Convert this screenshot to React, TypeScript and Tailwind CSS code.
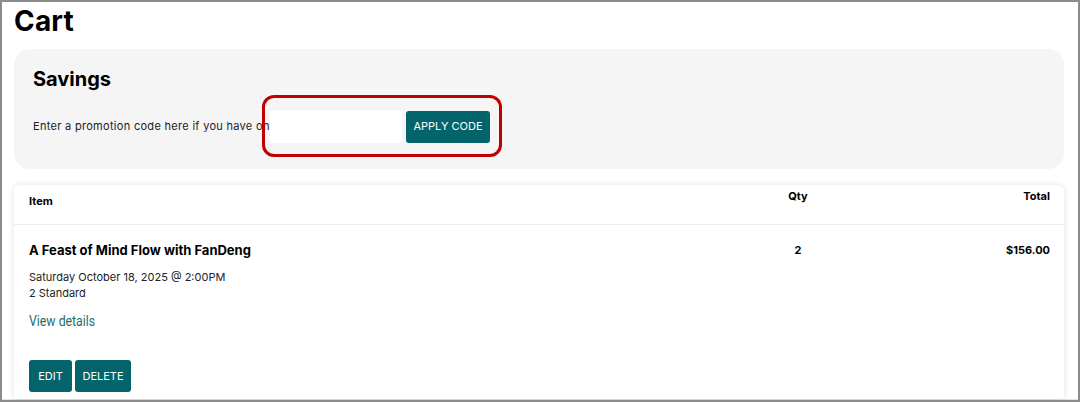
const teal = 'bg-[#03646b]';

function TealButton({ label, className }: { label: string; className?: string }) {
  return (
    <button
      className={`${teal} rounded-[3px] text-[11px] font-normal uppercase leading-none text-white ${className ?? ''}`}
    >
      {label}
    </button>
  );
}

export default function App() {
  return (
    <div className="h-[402px] w-[1080px] overflow-hidden border-2 border-[#8c8c8c] bg-white font-['Inter','Noto_Sans',sans-serif] text-black">
      <div className="flex h-full flex-col border-b border-[#e2e2e2] pl-[12px] pr-[14px]">
        <h1 className="mt-[2px] text-[28px] font-bold leading-[34px] tracking-[0.2px]">Cart</h1>

        <section className="relative mt-[11px] h-[120px] rounded-[16px] bg-[#f5f5f5] px-[19px] pt-[17px]">
          <h2 className="text-[20px] font-bold leading-[26px]">Savings</h2>
          <div className="mt-[18px] flex items-center">
            <span className="w-[239px] whitespace-nowrap text-[11px] leading-none tracking-[0.3px] text-[#222]">
              Enter a promotion code here if you have one
            </span>
            <input className="ml-[-2px] h-[33px] w-[132px] rounded-[4px] bg-white outline-none" />
            <TealButton label="Apply code" className="ml-[4px] h-[32px] w-[84px]" />
          </div>
          <div className="pointer-events-none absolute left-[248px] top-[46px] h-[62px] w-[240px] rounded-[12px] border-[3px] border-[#c00000]" />
        </section>

        <section className="mt-[16px] flex-1 rounded-t-[6px] bg-white shadow-[0_0_6px_rgba(0,0,0,0.12)]">
          <div className="flex h-[40px] border-b border-[#ececec] pl-[15px] pr-[14px] text-[11px] font-bold">
            <div className="flex-1 pt-[8px]">Item</div>
            <div className="w-[60px] pt-[3px] text-center">Qty</div>
            <div className="w-[222px] pt-[3px] text-right">Total</div>
          </div>
          <div className="flex pl-[15px] pr-[14px] pt-[15px]">
            <div className="flex-1">
              <div className="text-[13px] font-bold leading-[20px]">A Feast of Mind Flow with FanDeng</div>
              <div className="mt-[9px] text-[11px] leading-[16px] text-[#222]">Saturday October 18, 2025 @ 2:00PM</div>
              <div className="text-[11px] leading-[16px] text-[#222]">2 Standard</div>
              <div className="mt-[7px] h-[20px]">
                <span className="inline-block origin-left scale-x-[0.82] font-['Roboto',sans-serif] text-[15px] leading-[20px] text-[#1f6b71]">
                  View details
                </span>
              </div>
              <div className="mt-[32px] flex gap-[3px]">
                <TealButton label="Edit" className="h-[32px] w-[43px]" />
                <TealButton label="Delete" className="h-[32px] w-[56px]" />
              </div>
            </div>
            <div className="w-[60px] pt-[2px] text-center text-[11px] font-bold">2</div>
            <div className="w-[222px] pt-[2px] text-right text-[11px] font-bold">$156.00</div>
          </div>
        </section>
      </div>
    </div>
  );
}
